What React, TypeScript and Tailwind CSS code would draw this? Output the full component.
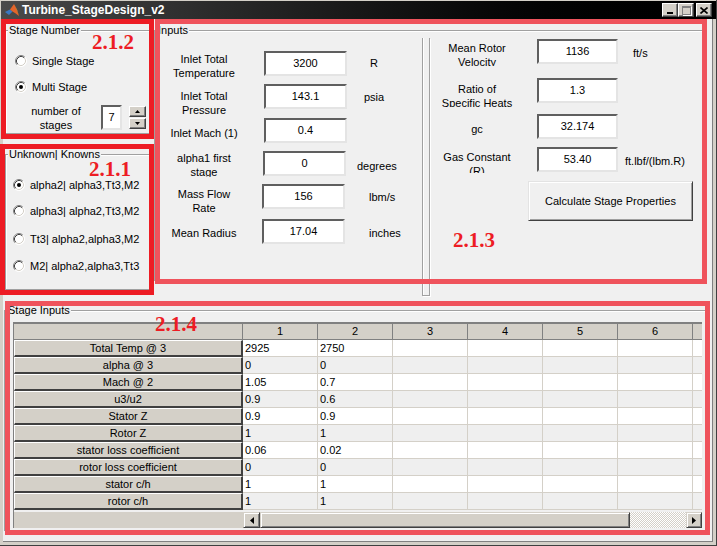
import React from "react";

function Radio({ checked = false }: { checked?: boolean }) {
  return (
    <svg width="12" height="12" viewBox="0 0 12 12" className="shrink-0">
      <circle cx="6" cy="6" r="5.5" fill="#ffffff" />
      <path d="M2.11 9.89 A5.5 5.5 0 0 1 9.89 2.11" fill="none" stroke="#808080" strokeWidth="1" />
      <path d="M9.89 2.11 A5.5 5.5 0 0 1 2.11 9.89" fill="none" stroke="#ffffff" strokeWidth="1" />
      <path d="M2.82 9.18 A4.5 4.5 0 0 1 9.18 2.82" fill="none" stroke="#404040" strokeWidth="1" />
      <path d="M9.18 2.82 A4.5 4.5 0 0 1 2.82 9.18" fill="none" stroke="#d4d0c8" strokeWidth="1" />
      {checked && <circle cx="6" cy="6" r="2" fill="#000000" />}
    </svg>
  );
}

function Group({ title, className = "", children }: { title: string; className?: string; children?: React.ReactNode }) {
  return (
    <div className={"relative shrink-0 border border-[#a0a0a0] shadow-[inset_1px_1px_0_#ffffff,1px_1px_0_#ffffff] " + className}>
      <span className="absolute left-[2px] top-[-7px] whitespace-nowrap bg-[#f0f0f0] px-[1px] text-[11px] leading-[12px]">{title}</span>
      {children}
    </div>
  );
}

function Edit({ value, className = "" }: { value: string; className?: string }) {
  return (
    <div className={"flex h-[25px] shrink-0 items-center justify-center border-2 border-t-[#5f5f5f] border-l-[#5f5f5f] border-r-[#e4e4e4] border-b-[#e4e4e4] bg-white text-[11px] leading-none " + className}>
      {value}
    </div>
  );
}

function Label({ lines, className = "" }: { lines: string[]; className?: string }) {
  return (
    <div className={"w-[80px] shrink-0 text-center text-[11px] leading-[14px] " + className}>
      {lines.map((l) => (
        <div key={l} className="whitespace-nowrap">{l}</div>
      ))}
    </div>
  );
}

function Unit({ text, className = "" }: { text: string; className?: string }) {
  return <div className={"whitespace-nowrap text-[11px] leading-[14px] " + className}>{text}</div>;
}

function RadioRow({ checked, text, className = "" }: { checked?: boolean; text: string; className?: string }) {
  return (
    <div className={"flex h-[14px] items-center " + className}>
      <Radio checked={checked} />
      <span className="ml-[5px] whitespace-nowrap text-[11px] leading-[14px]">{text}</span>
    </div>
  );
}

const rowHeads = [
  "Total Temp @ 3",
  "alpha @ 3",
  "Mach @ 2",
  "u3/u2",
  "Stator Z",
  "Rotor Z",
  "stator loss coefficient",
  "rotor loss coefficient",
  "stator c/h",
  "rotor c/h",
];
const col1 = ["2925", "0", "1.05", "0.9", "0.9", "1", "0.06", "0", "1", "1"];
const col2 = ["2750", "0", "0.7", "0.6", "0.9", "1", "0.02", "0", "1", "1"];

function Table() {
  return (
    <div className="ml-[8px] mt-[11px] flex h-[206px] w-[689px] flex-col border-l border-[#808080] text-[11px]">
      <div className="flex h-[18px] border-t-2 border-b border-t-[#808080] border-b-[#808080] bg-[#d4d0c8]">
        <div className="w-[229px] shrink-0 border-r border-[#808080]" />
        {["1", "2", "3", "4", "5", "6"].map((c) => (
          <div key={c} className="flex w-[75px] shrink-0 items-center justify-center border-r border-[#808080] leading-none">
            {c}
          </div>
        ))}
        <div className="w-[9px] shrink-0" />
      </div>
      {rowHeads.map((h, i) => {
        const bg = i % 2 === 0 ? "bg-white" : "bg-[#efefef]";
        return (
          <div key={h} className="flex h-[17px]">
            <div className="flex w-[229px] shrink-0 items-center justify-center border-t border-l border-b-2 border-r-2 border-t-white border-l-white border-b-[#404040] border-r-[#404040] bg-[#d4d0c8] leading-[14px]">
              {h}
            </div>
            {[0, 1, 2, 3, 4, 5].map((c) => (
              <div key={c} className={"w-[75px] shrink-0 border-r border-b border-[#d4d0c8] pl-[2px] leading-[16px] " + bg}>
                {c === 0 ? col1[i] : c === 1 ? col2[i] : ""}
              </div>
            ))}
            <div className={"w-[9px] shrink-0 border-b border-[#d4d0c8] " + bg} />
          </div>
        );
      })}
      <div className="flex h-[18px] bg-[#f0f0f0] pt-[2px]">
        <div className="h-[16px] w-[229px] shrink-0 bg-[#d4d0c8]" />
        <div className="flex h-[16px] w-[17px] shrink-0 items-center justify-center border border-t-[#d4d0c8] border-l-[#d4d0c8] border-r-[#404040] border-b-[#404040] bg-[#d4d0c8] shadow-[inset_1px_1px_0_#ffffff,inset_-1px_-1px_0_#808080]">
          <svg width="4" height="7" viewBox="0 0 4 7">
            <path d="M4 0 L0 3.5 L4 7 Z" fill="#000" />
          </svg>
        </div>
        <div className="h-[16px] w-[370px] shrink-0 border border-t-[#d4d0c8] border-l-[#d4d0c8] border-r-[#404040] border-b-[#404040] bg-[#d4d0c8] shadow-[inset_1px_1px_0_#ffffff,inset_-1px_-1px_0_#808080]" />
        <div className="h-[16px] w-[56px] shrink-0 bg-[image:repeating-conic-gradient(#d4d0c8_0%_25%,#ffffff_0%_50%)] bg-[length:2px_2px]" />
        <div className="flex h-[16px] w-[16px] shrink-0 items-center justify-center border border-t-[#d4d0c8] border-l-[#d4d0c8] border-r-[#404040] border-b-[#404040] bg-[#d4d0c8] shadow-[inset_1px_1px_0_#ffffff,inset_-1px_-1px_0_#808080]">
          <svg width="4" height="7" viewBox="0 0 4 7">
            <path d="M0 0 L4 3.5 L0 7 Z" fill="#000" />
          </svg>
        </div>
      </div>
    </div>
  );
}

function WinBtn({ children, className = "" }: { children?: React.ReactNode; className?: string }) {
  return (
    <div className={"flex h-[14px] w-[16px] items-center justify-center border border-t-white border-l-white border-r-[#404040] border-b-[#404040] bg-[#d4d0c8] shadow-[inset_-1px_-1px_0_#808080] " + className}>
      {children}
    </div>
  );
}

export default function App() {
  return (
    <div className="relative h-[546px] w-[717px] overflow-hidden bg-[#d4d0c8] font-['Liberation_Sans',Arial,sans-serif] text-black shadow-[inset_-1px_-1px_0_#404040]">
      <div className="flex h-full flex-col">
        {/* title bar */}
        <div className="mx-[1px] mt-[1px] flex h-[18px] shrink-0 items-center bg-linear-to-r from-[#4a4a4a] to-[#000000] pl-[3px] pr-[4px]">
          <svg width="16" height="16" viewBox="0 0 16 16" className="shrink-0">
            <path d="M1 10 L6 7.5 L8.5 9.5 L5 13 Z" fill="#3a78c2" />
            <path d="M6 7.5 L10 2 L12 6 L15 14 L11 11 L8.5 9.5 Z" fill="#e3642a" />
            <path d="M10 2 L12 6 L15 14 L13 7.5 Z" fill="#f6b12b" />
          </svg>
          <span className="ml-[2px] whitespace-nowrap text-[12px] font-bold leading-none text-white">Turbine_StageDesign_v2</span>
          <div className="ml-auto flex items-center">
            <WinBtn>
              <div className="mt-[6px] h-[2px] w-[6px] bg-black" />
            </WinBtn>
            <WinBtn>
              <div className="h-[9px] w-[9px] border border-t-2 border-[#808080] shadow-[1px_1px_0_#ffffff]" />
            </WinBtn>
            <WinBtn className="ml-[2px]">
              <svg width="8" height="7" viewBox="0 0 8 7">
                <path d="M0.5 0.5 L7.5 6.5 M7.5 0.5 L0.5 6.5" stroke="#000" strokeWidth="1.6" />
              </svg>
            </WinBtn>
          </div>
        </div>

        {/* client area */}
        <div className="mb-[4px] ml-[3px] mr-[4px] flex-1 border-r border-b border-[#808080] bg-[#f0f0f0]">
          <div className="flex">
            <div className="ml-[2px] mt-[11px] flex w-[146px] shrink-0 flex-col">
              <Group title="Stage Number" className="h-[104px]">
                <RadioRow className="ml-[9px] mt-[23px]" text="Single Stage" />
                <RadioRow className="ml-[9px] mt-[12px]" checked text="Multi Stage" />
                <div className="mt-[10px] flex items-start">
                  <div className="ml-[20px] w-[60px] shrink-0 text-center text-[11px] leading-[14px]">
                    <div>number of</div>
                    <div>stages</div>
                  </div>
                  <Edit className="ml-[15px] mt-[1px] w-[21px]" value="7" />
                  <div className="ml-[7px] mt-[2px] flex w-[17px] flex-col gap-[1px]">
                    <div className="flex h-[11px] items-center justify-center border border-t-white border-l-white border-r-[#404040] border-b-[#404040] bg-[#d4d0c8] shadow-[inset_-1px_-1px_0_#808080]">
                      <svg width="5" height="3" viewBox="0 0 5 3">
                        <path d="M2.5 0 L5 3 L0 3 Z" fill="#000" />
                      </svg>
                    </div>
                    <div className="flex h-[11px] items-center justify-center border border-t-white border-l-white border-r-[#404040] border-b-[#404040] bg-[#d4d0c8] shadow-[inset_-1px_-1px_0_#808080]">
                      <svg width="5" height="3" viewBox="0 0 5 3">
                        <path d="M0 0 L5 0 L2.5 3 Z" fill="#000" />
                      </svg>
                    </div>
                  </div>
                </div>
              </Group>
              <Group title="Unknown| Knowns" className="mt-[20px] h-[136px]">
                <RadioRow className="ml-[7px] mt-[23px]" checked text="alpha2| alpha3,Tt3,M2" />
                <RadioRow className="ml-[7px] mt-[12px]" text="alpha3| alpha2,Tt3,M2" />
                <RadioRow className="ml-[7px] mt-[14px]" text="Tt3| alpha2,alpha3,M2" />
                <RadioRow className="ml-[7px] mt-[13px]" text="M2| alpha2,alpha3,Tt3" />
              </Group>
            </div>

            <Group title="Inputs" className="ml-[3px] mt-[11px] flex h-[251px] w-[550px] items-start">
              {/* left inputs */}
              <div className="flex w-[267px] shrink-0 flex-col">
                <div className="mt-[20px] flex h-[25px] items-start">
                  <Label className="ml-[9px] mt-[1px]" lines={["Inlet Total", "Temperature"]} />
                  <Edit className="ml-[20px] w-[83px]" value="3200" />
                  <Unit className="ml-[23px] mt-[5px]" text="R" />
                </div>
                <div className="mt-[8px] flex h-[25px] items-start">
                  <Label className="ml-[9px] mt-[5px]" lines={["Inlet Total", "Pressure"]} />
                  <Edit className="ml-[20px] w-[83px]" value="143.1" />
                  <Unit className="ml-[17px] mt-[6px]" text="psia" />
                </div>
                <div className="mt-[9px] flex h-[25px] items-start">
                  <Label className="ml-[9px] mt-[8px]" lines={["Inlet Mach (1)"]} />
                  <Edit className="ml-[20px] w-[83px]" value="0.4" />
                </div>
                <div className="mt-[8px] flex h-[25px] items-start">
                  <Label className="ml-[9px] h-[26px] overflow-hidden" lines={["alpha1 first", "stage"]} />
                  <Edit className="ml-[19px] w-[83px]" value="0" />
                  <Unit className="ml-[11px] mt-[8px]" text="degrees" />
                </div>
                <div className="mt-[8px] flex h-[25px] items-start">
                  <Label className="ml-[9px] mt-[3px]" lines={["Mass Flow", "Rate"]} />
                  <Edit className="ml-[18px] w-[83px]" value="156" />
                  <Unit className="ml-[24px] mt-[6px]" text="lbm/s" />
                </div>
                <div className="mt-[10px] flex h-[25px] items-start">
                  <Label className="ml-[9px] mt-[7px]" lines={["Mean Radius"]} />
                  <Edit className="ml-[18px] w-[83px]" value="17.04" />
                  <Unit className="ml-[24px] mt-[7px]" text="inches" />
                </div>
              </div>

              {/* narrow separator panel */}
              <div className="mt-[7px] h-[258px] w-[8px] shrink-0 border-l border-r border-b border-[#a0a0a0] shadow-[inset_1px_0_0_#ffffff,1px_1px_0_#ffffff]" />

              {/* right inputs */}
              <div className="ml-[7px] flex flex-col">
                <div className="mt-[8px] flex h-[25px] items-start">
                  <Label className="mt-[2px] h-[25px] overflow-hidden" lines={["Mean Rotor", "Velocity"]} />
                  <Edit className="ml-[20px] w-[81px]" value="1136" />
                  <Unit className="ml-[15px] mt-[7px]" text="ft/s" />
                </div>
                <div className="mt-[14px] flex h-[25px] items-start">
                  <Label className="mt-[4px] h-[25px] overflow-hidden" lines={["Ratio of", "Specific Heats"]} />
                  <Edit className="ml-[20px] w-[81px]" value="1.3" />
                </div>
                <div className="mt-[11px] flex h-[25px] items-start">
                  <Label className="mt-[8px]" lines={["gc"]} />
                  <Edit className="ml-[20px] w-[81px]" value="32.174" />
                </div>
                <div className="mt-[8px] flex h-[25px] items-start">
                  <Label className="mt-[3px] h-[23px] overflow-hidden" lines={["Gas Constant", "(R)"]} />
                  <Edit className="ml-[20px] w-[81px]" value="53.40" />
                  <Unit className="ml-[7px] mt-[7px]" text="ft.lbf/(lbm.R)" />
                </div>
                <div className="ml-[91px] mt-[9px] flex h-[40px] w-[165px] items-center justify-center border border-t-[#e3e3e3] border-l-[#e3e3e3] border-r-[#404040] border-b-[#404040] bg-[#f0f0f0] text-[11px] shadow-[inset_1px_1px_0_#ffffff,inset_-1px_-1px_0_#a0a0a0]">
                  Calculate Stage Properties
                </div>
              </div>
            </Group>
          </div>

          <Group title="Stage Inputs" className="ml-[1px] mt-[20px] h-[221px] w-[702px]">
            <Table />
          </Group>
        </div>
      </div>

      {/* annotation overlays */}
      <div className="pointer-events-none absolute left-[1px] top-[19px] h-[120px] w-[153px] border-[5px] border-[#ed1c24]" />
      <div className="pointer-events-none absolute left-0 top-[144px] h-[151px] w-[154px] border-[5px] border-[#ed1c24]" />
      <div className="pointer-events-none absolute left-[155px] top-[19px] h-[265px] w-[552px] border-[5px] border-[#ef535c]" />
      <div className="pointer-events-none absolute left-[5px] top-[301px] h-[234px] w-[705px] border-[5px] border-[#ef535c]" />
      <div className="absolute left-[92px] top-[32px] font-['Liberation_Serif',serif] text-[21px] font-bold leading-[20px] text-[#ed1c24]">2.1.2</div>
      <div className="absolute left-[89px] top-[159px] font-['Liberation_Serif',serif] text-[21px] font-bold leading-[20px] text-[#ed1c24]">2.1.1</div>
      <div className="absolute left-[453px] top-[230px] font-['Liberation_Serif',serif] text-[21px] font-bold leading-[20px] text-[#ed1c24]">2.1.3</div>
      <div className="absolute left-[155px] top-[314px] font-['Liberation_Serif',serif] text-[21px] font-bold leading-[20px] text-[#ed1c24]">2.1.4</div>
    </div>
  );
}
